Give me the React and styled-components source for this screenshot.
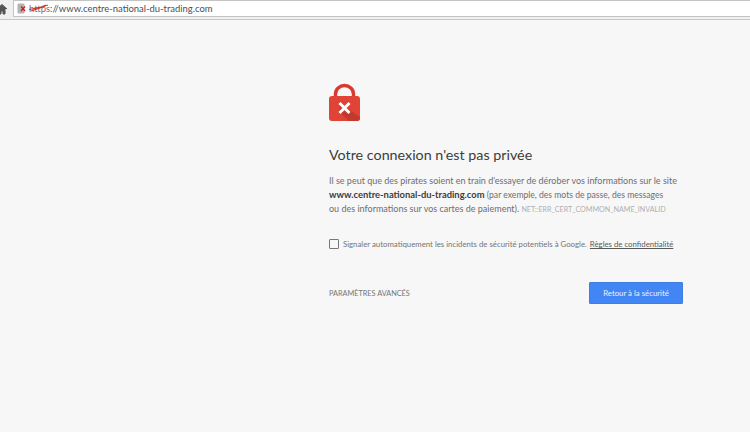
import React from 'react';
import styled, { createGlobalStyle } from 'styled-components';

const Global = createGlobalStyle`
  html, body { margin: 0; padding: 0; height: 100%; overflow: hidden; }
  body { background: #f7f7f7; font-family: Lato, "Open Sans", "Liberation Sans", sans-serif; }
`;

const Page = styled.div`
  width: 750px;
  height: 432px;
  display: flex;
  flex-direction: column;
  overflow: hidden;
`;

const Toolbar = styled.div`
  height: 19px;
  background: #f0f0f0;
  border-bottom: 1px solid #c8c8c8;
  display: flex;
  align-items: flex-start;
  flex-shrink: 0;
`;

const HomeButton = styled.div`
  width: 13px;
  height: 17px;
  display: flex;
  align-items: center;
  overflow: hidden;
`;

const Omnibox = styled.div`
  flex: 1;
  height: 15px;
  background: #fff;
  border: 1px solid #c4c4c4;
  border-right: 0;
  display: flex;
  align-items: center;
  padding-left: 3px;
  font-size: 9.45px;
  color: #4a4f55;
`;

const Scheme = styled.span`
  position: relative;
  color: #8a6a6a;
`;

const Strike = styled.svg`
  position: absolute;
  left: -1px;
  top: -1px;
  width: 24px;
  height: 12px;
`;

const Main = styled.main`
  width: 354px;
  margin-left: 329px;
  padding-top: 63px;
  color: #6e6e6e;
`;

const Heading = styled.h1`
  margin: 22px 0 9px;
  font-size: 14.3px;
  font-weight: 400;
  line-height: 20px;
  color: #3c3c3c;
`;

const Body = styled.p`
  margin: 0;
  font-size: 9px;
  line-height: 14px;
  white-space: nowrap;
  strong { color: #3c3c3c; font-weight: 700; font-size: 9.4px; }
`;

const Aside = styled.span`
  font-size: 8.6px;
`;

const ErrorCode = styled.span`
  font-size: 7.15px;
  color: #b0b0b0;
`;

const Consent = styled.label`
  display: flex;
  align-items: center;
  margin-top: 22px;
  font-size: 7.8px;
  white-space: nowrap;
  color: #757575;
  a { color: #5a5a5a; text-decoration: underline; margin-left: 3px; }
`;

const Box = styled.span`
  width: 8px;
  height: 8px;
  border: 1px solid #777;
  border-radius: 1px;
  margin-right: 4px;
  flex-shrink: 0;
`;

const Actions = styled.div`
  display: flex;
  justify-content: space-between;
  align-items: center;
  margin-top: 33px;
`;

const Advanced = styled.span`
  font-size: 7.3px;
  color: #757575;
`;

const Primary = styled.button`
  width: 94px;
  height: 22px;
  border: 1px solid #3f7fe0;
  border-radius: 1px;
  background: #4285f4;
  color: #eaf1ff;
  font-family: inherit;
  font-size: 7.8px;
  font-weight: 400;
  padding: 0;
`;

function LockIcon() {
  return (
    <svg width="32" height="40" viewBox="0 0 32 40" style={{ display: 'block' }}>
      <path d="M6.5 17V11a9 8.5 0 0 1 18 0v6" fill="none" stroke="#d93a2f" strokeWidth="3.4" />
      <rect x="0" y="13" width="31" height="25" rx="3" fill="#e04436" />
      <path d="M10.5 20l20.5 14v1a3 3 0 0 1-3 3h-8l-9.5-9z" fill="#c4392d" />
      <path d="M10.5 20l10 10M20.5 20l-10 10" stroke="#fff" strokeWidth="3" fill="none" />
    </svg>
  );
}

function HomeIcon() {
  return (
    <svg width="7" height="12" viewBox="0 0 7 12">
      <path d="M-3 6L2 1.5l5 4.500M-1 6v5h2V8h2v3h2V6" fill="#555" stroke="#555" strokeWidth="1" />
    </svg>
  );
}

function BrokenLock() {
  return (
    <svg width="11" height="12" viewBox="0 0 11 12" style={{ marginRight: 1 }}>
      <rect x="0.5" y="0.5" width="7" height="10" rx="1" fill="#b4b4b4" />
      <path d="M4 3.5l4 4.500M8 3.5L4 8" stroke="#d0201c" strokeWidth="1.4" />
    </svg>
  );
}

export default function App() {
  return (
    <Page>
      <Global />
      <Toolbar>
        <HomeButton><HomeIcon /></HomeButton>
        <Omnibox>
          <BrokenLock />
          <Scheme>
            https
            <Strike viewBox="0 0 24 12">
              <path d="M1 7.5l9-1.5l8-3M3 9l9-3l8-3" fill="none" stroke="#c0201c" strokeWidth="0.9" />
            </Strike>
          </Scheme>
          ://www.centre-national-du-trading.com
        </Omnibox>
      </Toolbar>
      <Main>
        <LockIcon />
        <Heading>Votre connexion n'est pas privée</Heading>
        <Body>Il se peut que des pirates soient en train d'essayer de dérober vos informations sur le site</Body>
        <Body><strong>www.centre-national-du-trading.com</strong> <Aside>(par exemple, des mots de passe, des messages</Aside></Body>
        <Body>ou des informations sur vos cartes de paiement). <ErrorCode>NET::ERR_CERT_COMMON_NAME_INVALID</ErrorCode></Body>
        <Consent>
          <Box />
          Signaler automatiquement les incidents de sécurité potentiels à Google. <a>Règles de confidentialité</a>
        </Consent>
        <Actions>
          <Advanced>PARAMÈTRES AVANCÉS</Advanced>
          <Primary>Retour à la sécurité</Primary>
        </Actions>
      </Main>
    </Page>
  );
}
